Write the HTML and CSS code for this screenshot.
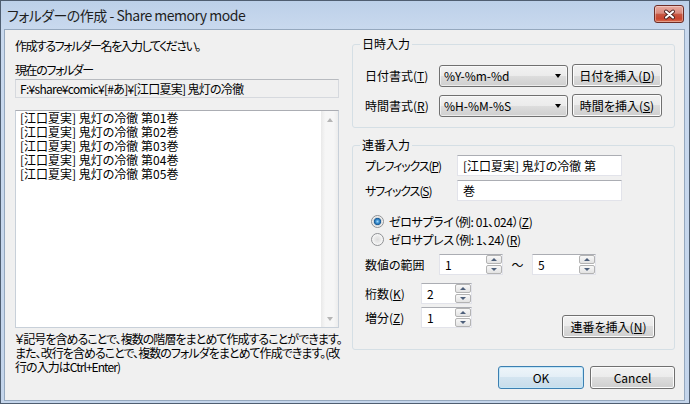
FILE: index.html
```html
<!DOCTYPE html>
<html lang="ja">
<head>
    <meta charset="UTF-8">
    <title>フォルダーの作成 - Share memory mode</title>
    <link rel="stylesheet" href="styles.css">
</head>
<body>
    <div class="window">
        <!-- Title bar -->
        <header class="titlebar">
            <span class="title">フォルダーの作成 - Share memory mode</span>
            <button class="close" aria-label="閉じる">
                <svg width="13" height="11" viewBox="0 0 13 11">
                    <path d="M3 2.5 L10 8.5 M10 2.5 L3 8.5" stroke="#4a2320" stroke-width="3.8" stroke-linecap="round" fill="none"/>
                    <path d="M3 2.5 L10 8.5 M10 2.5 L3 8.5" stroke="#fff" stroke-width="2.1" stroke-linecap="round" fill="none"/>
                </svg>
            </button>
        </header>

        <div class="client">
            <!-- Left column -->
            <div class="left">
                <p class="lead">作成するフォルダー名を入力してください。</p>
                <p class="caption">現在のフォルダー</p>
                <div class="path">F:¥share¥comic¥[#あ]¥[江口夏実] 鬼灯の冷徹</div>
                <div class="listbox">
                    <div class="list-text">
                        [江口夏実] 鬼灯の冷徹 第01巻<br>
                        [江口夏実] 鬼灯の冷徹 第02巻<br>
                        [江口夏実] 鬼灯の冷徹 第03巻<br>
                        [江口夏実] 鬼灯の冷徹 第04巻<br>
                        [江口夏実] 鬼灯の冷徹 第05巻
                    </div>
                    <div class="vscroll">
                        <span class="arrow up"></span>
                        <span class="arrow down"></span>
                    </div>
                </div>
                <p class="note">￥記号を含めることで、複数の階層をまとめて作成することができます。<br>また、改行を含めることで、複数のフォルダをまとめて作成できます。(改<br>行の入力はCtrl+Enter)</p>
            </div>

            <!-- Right column -->
            <div class="right">
                <fieldset class="group date-group">
                    <legend>日時入力</legend>
                    <div class="row">
                        <span class="lbl w74">日付書式(<u>T</u>)</span>
                        <div class="combo"><span>%Y-%m-%d</span><i class="caret"></i></div>
                        <button class="btn btn-insert">日付を挿入(<u>D</u>)</button>
                    </div>
                    <div class="row">
                        <span class="lbl w74">時間書式(<u>R</u>)</span>
                        <div class="combo"><span>%H-%M-%S</span><i class="caret"></i></div>
                        <button class="btn btn-insert">時間を挿入(<u>S</u>)</button>
                    </div>
                </fieldset>

                <fieldset class="group seq-group">
                    <legend>連番入力</legend>
                    <div class="row field">
                        <span class="lbl w92 kana">プレフィックス(<u>P</u>)</span>
                        <div class="text-input">[江口夏実] 鬼灯の冷徹 第</div>
                    </div>
                    <div class="row field">
                        <span class="lbl w92 kana">サフィックス(<u>S</u>)</span>
                        <div class="text-input">巻</div>
                    </div>

                    <div class="radios">
                        <div class="radio"><span class="radio-mark on"></span>ゼロサプライ（例: 01、024）(<u>Z</u>)</div>
                        <div class="radio"><span class="radio-mark"></span>ゼロサプレス（例: 1、24）(<u>R</u>)</div>
                    </div>

                    <div class="row range-row">
                        <span class="lbl w74">数値の範囲</span>
                        <div class="spin w64">
                            <span class="spin-val">1</span>
                            <span class="spin-btns"><i class="up"></i><i class="dn"></i></span>
                        </div>
                        <span class="tilde">～</span>
                        <div class="spin w64">
                            <span class="spin-val">5</span>
                            <span class="spin-btns"><i class="up"></i><i class="dn"></i></span>
                        </div>
                    </div>

                    <div class="row digits-row">
                        <span class="lbl w56">桁数(<u>K</u>)</span>
                        <div class="spin w51">
                            <span class="spin-val">2</span>
                            <span class="spin-btns"><i class="up"></i><i class="dn"></i></span>
                        </div>
                    </div>

                    <div class="row step-row">
                        <span class="lbl w56">増分(<u>Z</u>)</span>
                        <div class="spin w51">
                            <span class="spin-val">1</span>
                            <span class="spin-btns"><i class="up"></i><i class="dn"></i></span>
                        </div>
                        <button class="btn btn-seq">連番を挿入(<u>N</u>)</button>
                    </div>
                </fieldset>

                <div class="actions">
                    <button class="btn btn-ok">OK</button>
                    <button class="btn btn-cancel">Cancel</button>
                </div>
            </div>
        </div>
    </div>
</body>
</html>
```

FILE: styles.css
```css
* {
    box-sizing: border-box;
}

html, body {
    margin: 0;
    padding: 0;
}

body {
    width: 690px;
    height: 404px;
    overflow: hidden;
    font-family: "Noto Sans CJK JP", "Noto Sans", sans-serif;
    font-size: 12px;
    font-feature-settings: "palt";
    color: #000;
    background: #c4d5eb;
}

p {
    margin: 0;
}

u {
    text-underline-offset: 1px;
}

/* Window frame */
.window {
    height: 404px;
    display: flex;
    flex-direction: column;
    border: 1px solid #4f5e71;
    padding: 0 4px 2px 3px;
    background: linear-gradient(#bcd0e9, #c9d9ee 28px, #c4d5eb);
}

.titlebar {
    flex: none;
    height: 28px;
    display: flex;
    align-items: center;
    padding-left: 3px;
}

.title {
    font-size: 14px;
    line-height: 18px;
    letter-spacing: -0.5px;
    color: #1e1e1e;
}

.close {
    align-self: flex-start;
    width: 30px;
    height: 18px;
    margin: 4px 1px 0 auto;
    padding: 0;
    display: flex;
    align-items: center;
    justify-content: center;
    border: 1px solid #6e2d26;
    border-radius: 3px;
    background: linear-gradient(#e8aa9f, #d98b7e 45%, #c65641 52%, #c9452f 80%, #d9704f);
    box-shadow: inset 0 0 0 1px rgba(255, 255, 255, 0.35);
}

.client {
    flex: 1;
    display: grid;
    grid-template-columns: 324px 1fr;
    column-gap: 13px;
    padding: 0 9px 0 10px;
    background: #f0f0f0;
    border: 1px solid #95a8be;
}

/* Left column */
.left {
    display: flex;
    flex-direction: column;
}

.lead {
    margin-top: 8px;
    line-height: 16px;
    letter-spacing: -1.5px;
}

.caption {
    margin-top: 8px;
    line-height: 16px;
    letter-spacing: -1.4px;
}

.path {
    margin-top: 1px;
    height: 19px;
    padding-left: 4px;
    line-height: 17px;
    letter-spacing: -0.7px;
    white-space: nowrap;
    border: 1px solid #d6d9de;
    border-top-color: #b8bbc0;
}

.listbox {
    margin-top: 12px;
    height: 218px;
    display: flex;
    background: #fff;
    border: 1px solid #c8d0d9;
    border-top-color: #abadb3;
}

.list-text {
    flex: 1;
    padding: 0 4px;
    line-height: 14px;
    white-space: nowrap;
}

.vscroll {
    flex: none;
    width: 17px;
    display: flex;
    flex-direction: column;
    justify-content: space-between;
    align-items: center;
    padding: 7px 0 6px;
    background: linear-gradient(90deg, #e9e9e9, #f6f6f6 25%, #f6f6f6 75%, #ececec);
}

.arrow {
    width: 0;
    height: 0;
    border-left: 3.5px solid transparent;
    border-right: 3.5px solid transparent;
}

.arrow.up {
    border-bottom: 4px solid #b5b5b5;
}

.arrow.down {
    border-top: 4px solid #b5b5b5;
}

.note {
    margin-top: 4px;
    line-height: 14px;
    letter-spacing: -0.95px;
    white-space: nowrap;
}

/* Right column */
.right {
    display: flex;
    flex-direction: column;
}

.group {
    min-width: 0;
    margin: 0;
    border: 1px solid #d5dfe5;
    border-radius: 3px;
}

.group legend {
    padding: 0 2px;
    margin-left: -5px;
    line-height: 16px;
}

.date-group {
    margin-top: 6px;
    padding: 12px 12px 10px 12px;
}

.seq-group {
    margin-top: 9px;
    padding: 2px 19px 11px 12px;
}

.row {
    display: flex;
    align-items: center;
}

.lbl {
    flex: none;
    line-height: 21px;
    white-space: nowrap;
}

.lbl.kana {
    letter-spacing: -1.1px;
}

.w56 { width: 56px; }
.w74 { width: 74px; }
.w92 { width: 92px; }

.date-group .row {
    height: 23px;
}

.date-group .row + .row {
    margin-top: 7px;
}

.combo {
    width: 129px;
    height: 22px;
    margin-right: 4px;
    padding: 0 6px 0 4px;
    display: flex;
    align-items: center;
    justify-content: space-between;
    border: 1px solid #707070;
    border-radius: 3px;
    background: linear-gradient(#f2f2f2, #ebebeb 50%, #dddddd 50%, #cfcfcf);
    box-shadow: inset 0 0 0 1px rgba(255, 255, 255, 0.6);
}

.caret {
    width: 0;
    height: 0;
    border-left: 3.5px solid transparent;
    border-right: 3.5px solid transparent;
    border-top: 4px solid #000;
}

.btn {
    height: 23px;
    padding: 0;
    font: inherit;
    color: #000;
    border: 1px solid #707070;
    border-radius: 3px;
    background: linear-gradient(#f2f2f2, #ebebeb 50%, #dddddd 50%, #cfcfcf);
    box-shadow: inset 0 0 0 1px #fcfcfc;
}

.btn-insert {
    width: 90px;
}

.field {
    height: 21px;
}

.field + .field {
    margin-top: 4px;
}

.text-input {
    width: 165px;
    height: 21px;
    padding-left: 5px;
    line-height: 19px;
    white-space: nowrap;
    background: #fff;
    border: 1px solid #e2e3ea;
    border-top-color: #abadb3;
}

.radios {
    margin-top: 11px;
    padding-left: 6px;
}

.radio {
    height: 18px;
    display: flex;
    align-items: center;
    letter-spacing: -0.4px;
    white-space: nowrap;
}

.radio-mark {
    flex: none;
    width: 13px;
    height: 13px;
    margin-right: 5px;
    border-radius: 50%;
    border: 1px solid #8f9194;
    background: radial-gradient(circle, #dcdcdc 0, #e9e9e9 3px, #fbfbfb 6px);
}

.radio-mark.on {
    background: radial-gradient(circle, #a4dbfb 0, #3b8fd1 1.8px, #1a5b95 3.3px, #cfd3d6 4px, #ececec 4.8px, #fbfbfb 6px);
}

.range-row {
    height: 21px;
    margin-top: 6px;
}

.digits-row {
    height: 21px;
    margin-top: 8px;
}

.step-row {
    margin-top: 3px;
    align-items: flex-start;
}

.spin {
    flex: none;
    height: 21px;
    display: flex;
    background: #fff;
    border: 1px solid #e2e3ea;
    border-top-color: #abadb3;
}

.w51 { width: 51px; }
.w64 { width: 64px; }

.spin-val {
    flex: 1;
    padding-left: 5px;
    line-height: 19px;
}

.spin-btns {
    flex: none;
    width: 16px;
    display: flex;
    flex-direction: column;
    gap: 1px;
}

.spin-btns i {
    flex: 1;
    display: flex;
    align-items: center;
    justify-content: center;
    border: 1px solid #b3b3b3;
    border-radius: 2px;
    background: linear-gradient(#f8f8f8, #e3e3e3);
}

.spin-btns i::after {
    content: "";
    width: 0;
    height: 0;
    border-left: 3px solid transparent;
    border-right: 3px solid transparent;
}

.spin-btns .up::after {
    border-bottom: 3px solid #4d5f7a;
}

.spin-btns .dn::after {
    border-top: 3px solid #4d5f7a;
}

.tilde {
    width: 29px;
    text-align: center;
}

.btn-seq {
    width: 93px;
    margin: 8px 0 0 auto;
}

.actions {
    margin-top: 16px;
    display: flex;
    justify-content: flex-end;
    gap: 6px;
}

.btn-ok {
    width: 86px;
    border-color: #3c7fb1;
    background: linear-gradient(#eef5fa, #e3eef6 50%, #d3e4f0 50%, #c7dcea);
    box-shadow: inset 0 0 0 1px #c3e6f7;
}

.btn-cancel {
    width: 85px;
}
```
